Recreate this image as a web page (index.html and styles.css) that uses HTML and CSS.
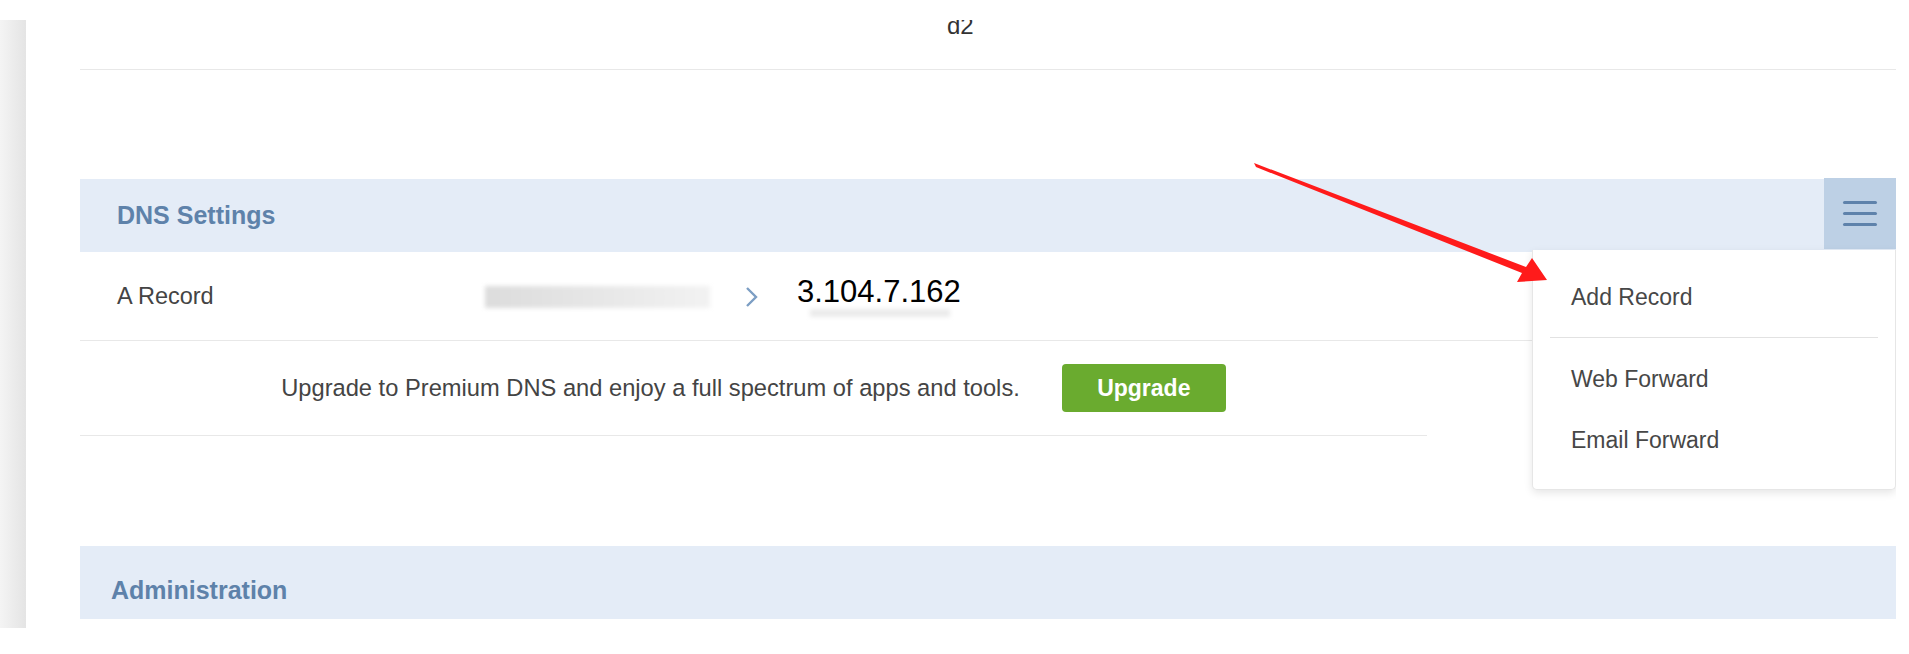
FILE: index.html
```html
<!DOCTYPE html>
<html lang="en">
<head>
    <meta charset="UTF-8">
    <meta name="viewport" content="width=device-width, initial-scale=1.0">
    <title>DNS Settings</title>
    <link rel="stylesheet" href="styles.css">
</head>
<body>
    <div class="page">
        <div class="side-strip"></div>

        <div class="content">
            <!-- previous table, scrolled mostly out of view -->
            <div class="top-row">
                <div class="cut-text">d2</div>
            </div>

            <div class="section">
                <div class="section-head">
                    <div class="section-title">DNS Settings</div>
                    <button class="menu-btn" aria-label="Menu">
                        <span></span><span></span><span></span>
                    </button>
                </div>

                <div class="record-row">
                    <div class="record-type">A Record</div>
                    <div class="blurred"></div>
                    <svg class="chevron" width="16" height="22" viewBox="0 0 16 22">
                        <path d="M3 2 L12 11 L3 20" fill="none" stroke="#7c9ec4" stroke-width="2.4"/>
                    </svg>
                    <div class="ip">3.104.7.162</div>
                </div>

                <div class="upgrade-row">
                    <span>Upgrade to Premium DNS and enjoy a full spectrum of apps and tools.</span>
                    <button class="upgrade-btn">Upgrade</button>
                </div>

                <div class="dropdown">
                    <div class="menu-item first">Add Record</div>
                    <div class="menu-sep"></div>
                    <div class="menu-item">Web Forward</div>
                    <div class="menu-item">Email Forward</div>
                </div>
            </div>

            <div class="section admin">
                <div class="section-head">
                    <div class="section-title">Administration</div>
                </div>
            </div>
        </div>
    </div>

    <!-- red annotation arrow -->
    <svg class="arrow" width="1909" height="654" viewBox="0 0 1909 654">
        <polygon points="1254,163 1256,167 1522,273 1517,282 1547,280 1532,258 1526,267" fill="#ff1b1b"/>
    </svg>
</body>
</html>
```

FILE: styles.css
```css
body {
    margin: 0;
    padding: 0;
    font-family: "Liberation Sans", Arial, sans-serif;
    background: #fff;
    color: #444;
    overflow: hidden;
}

.page {
    display: flex;
    padding-top: 20px;
    height: 634px;
}

.side-strip {
    width: 26px;
    height: 608px;
    background: linear-gradient(to right, #f4f4f4, #e4e4e4);
    flex: none;
}

.content {
    position: relative;
    margin-left: 54px;
    width: 1816px;
    height: 608px;
    overflow: hidden;
}

.top-row {
    display: flow-root;
    height: 49px;
    border-bottom: 1px solid #e8e8e8;
    padding-left: 867px;
}

.cut-text {
    font-size: 24px;
    line-height: 24px;
    margin-top: -6px;
    color: #333;
}

.section {
    position: relative;
    margin-top: 109px;
}

.section.admin {
    margin-top: 110px;
}

.section-head {
    display: flex;
    justify-content: space-between;
    align-items: center;
    height: 73px;
    background: #e4ecf7;
}

.section-title {
    padding-left: 37px;
    font-size: 25px;
    font-weight: bold;
    color: #5e82aa;
}

.admin .section-title {
    padding-left: 31px;
    padding-top: 15px;
}

.menu-btn {
    align-self: flex-start;
    display: flex;
    flex-direction: column;
    justify-content: center;
    align-items: center;
    gap: 8px;
    width: 72px;
    height: 71px;
    margin-top: -1px;
    padding: 0;
    border: none;
    background: #bdd0e5;
}

.menu-btn span {
    display: block;
    width: 34px;
    height: 3px;
    border-radius: 2px;
    background: #5e82ab;
}

.record-row {
    display: flex;
    align-items: center;
    height: 88px;
    border-bottom: 1px solid #e8e8e8;
}

.record-type {
    width: 368px;
    padding-left: 37px;
    font-size: 23.5px;
    flex: none;
}

.blurred {
    width: 225px;
    height: 22px;
    margin-top: 2px;
    background: linear-gradient(to right, #dcdcdc, #e8e8e8 55%, #f2f2f2);
    filter: blur(2px);
}

.chevron {
    margin-left: 34px;
    margin-top: 2px;
}

.ip {
    position: relative;
    margin-left: 37px;
    margin-bottom: 9px;
    font-size: 31px;
    color: #000;
}

.ip::after {
    content: "";
    position: absolute;
    left: 13px;
    top: 35px;
    width: 140px;
    height: 8px;
    background: #ebebeb;
    filter: blur(2px);
}

.upgrade-row {
    display: flex;
    justify-content: center;
    align-items: center;
    gap: 42px;
    width: 1347px;
    height: 94px;
    border-bottom: 1px solid #e8e8e8;
    font-size: 23.7px;
}

.upgrade-btn {
    width: 164px;
    height: 48px;
    border: none;
    border-radius: 4px;
    background: #6aab2f;
    color: #fff;
    font-family: "Liberation Sans", Arial, sans-serif;
    font-size: 23px;
    font-weight: bold;
}

.dropdown {
    position: absolute;
    left: 1452px;
    top: 71px;
    width: 362px;
    height: 239px;
    background: #fff;
    border: 1px solid #e6e6e6;
    border-top: none;
    border-radius: 0 0 5px 5px;
    box-shadow: 0 3px 8px rgba(0, 0, 0, 0.1);
}

.menu-item {
    padding-left: 38px;
    font-size: 23px;
    line-height: 34px;
    color: #474747;
}

.menu-item.first {
    margin: 30px 0 23px;
}

.menu-sep {
    height: 1px;
    margin: 0 17px 24px 17px;
    background: #e2e2e2;
}

.menu-item + .menu-item {
    margin-top: 27px;
}

.arrow {
    position: absolute;
    left: 0;
    top: 0;
    pointer-events: none;
}
```
